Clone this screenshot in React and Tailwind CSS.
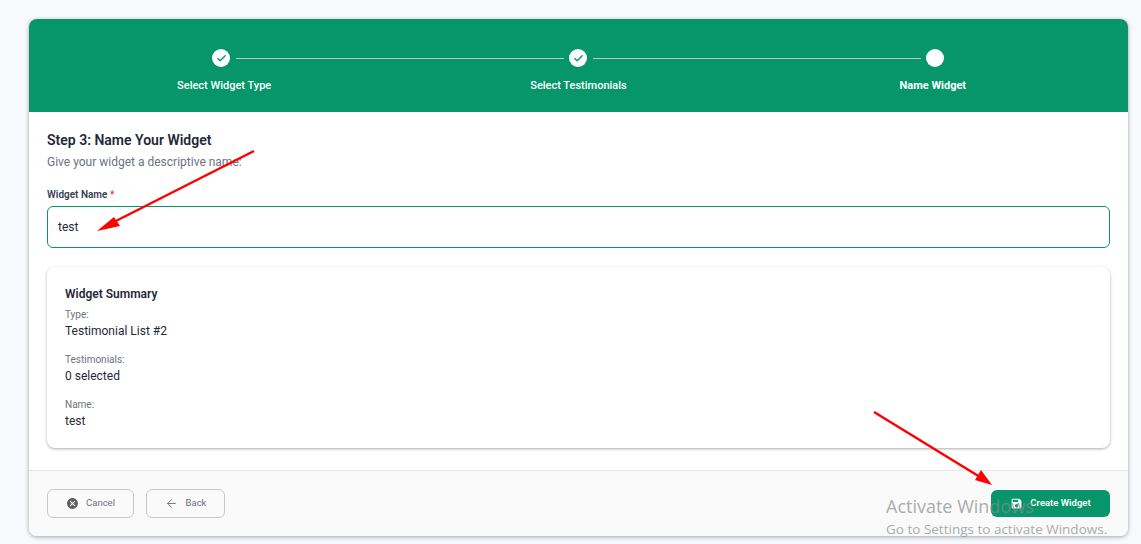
import { ArrowLeft, Check } from 'lucide-react';

const steps = [
  { label: 'Select Widget Type', done: true },
  { label: 'Select Testimonials', done: true },
  { label: 'Name Widget', done: false },
];

const summary = [
  { label: 'Type:', value: 'Testimonial List #2' },
  { label: 'Testimonials:', value: '0 selected' },
  { label: 'Name:', value: 'test' },
];

const Stepper = () => (
  <div className="flex h-[93px] rounded-t-lg bg-[#06966a] px-[18px] pt-[30px]">
    {steps.map((step, i) => (
      <div key={step.label} className="flex flex-1 flex-col items-stretch">
        <div className="flex h-[18px] items-center">
          <div className={`h-px flex-1 ${i === 0 ? '' : 'mr-[5px] bg-[#c9c4c4]'}`} />
          <div className="flex h-[18px] w-[18px] items-center justify-center rounded-full bg-white">
            {step.done && <Check className="h-[11px] w-[11px] text-[#06966a]" strokeWidth={3} />}
          </div>
          <div className={`h-px flex-1 ${i === 2 ? '' : 'ml-[6px] bg-[#c9c4c4]'}`} />
        </div>
        <div
          className={`mt-[11px] text-center text-[11px] leading-[16px] text-white ${
            step.done ? 'font-medium' : 'font-bold'
          }`}
        >
          {step.label}
        </div>
      </div>
    ))}
  </div>
);

const Arrows = () => (
  <svg className="pointer-events-none absolute left-0 top-0" width="1141" height="544">
    <line x1="254" y1="151" x2="108" y2="225" stroke="#fe0000" strokeWidth="2.5" />
    <polygon points="97,231 114,217 120,226" fill="#fe0000" />
    <line x1="874" y1="412" x2="980" y2="477" stroke="#fe0000" strokeWidth="2.5" />
    <polygon points="992,485 975,480 981,470" fill="#fe0000" />
  </svg>
);

export default function App() {
  return (
    <div
      className="relative h-[544px] w-[1141px] overflow-hidden bg-[#f8f9fc] pl-[29px] pt-[19px] text-[#1f2937]"
      style={{ fontFamily: 'Roboto, sans-serif' }}
    >
      <div className="flex h-[517px] w-[1099px] flex-col rounded-lg bg-white shadow-[0_1px_4px_rgba(0,0,0,0.35)]">
        <Stepper />

        {/* Form */}
        <div className="flex-1 px-[18px] pt-[18px]">
          <h2 className="text-[14px] font-semibold leading-[20px]">Step 3: Name Your Widget</h2>
          <p className="mt-[3px] text-[12px] leading-[18px] text-[#6b7280]">Give your widget a descriptive name:</p>

          <label className="mt-[16px] block text-[10px] font-semibold leading-[16px] text-[#374151]">
            Widget Name <span className="text-[#ef4444]">*</span>
          </label>
          <div className="mt-[3px] flex h-[42px] items-center rounded-md border border-[#06966a] px-[10px] text-[12px]">
            test
          </div>

          {/* Summary */}
          <div className="mt-[19px] h-[181px] rounded-lg bg-white px-[18px] pt-[18px] shadow-[0_1px_3px_rgba(0,0,0,0.32)]">
            <h3 className="text-[12px] font-semibold leading-[18px]">Widget Summary</h3>
            <div className="mt-[4px] flex flex-col gap-[12px]">
              {summary.map((row) => (
                <div key={row.label}>
                  <div className="text-[10px] leading-[15px] text-[#6b7280]">{row.label}</div>
                  <div className="text-[12px] leading-[18px]">{row.value}</div>
                </div>
              ))}
            </div>
          </div>
        </div>

        {/* Footer */}
        <div className="flex h-[66px] items-center justify-between rounded-b-lg border-t border-[#e5e7eb] bg-[#fafafa] px-[18px]">
          <div className="flex gap-3">
            <button className="flex h-[29px] w-[87px] items-center justify-center gap-[7px] rounded-md border border-[#c9c9c9] text-[9.5px] text-[#6b7280]">
              <svg width="13" height="13" viewBox="0 0 24 24" fill="#5f5f5f">
                <path d="M12 2C6.47 2 2 6.47 2 12s4.47 10 10 10 10-4.47 10-10S17.53 2 12 2zm5 13.59L15.59 17 12 13.41 8.41 17 7 15.59 10.59 12 7 8.41 8.41 7 12 10.59 15.59 7 17 8.41 13.41 12 17 15.59z" />
              </svg>
              Cancel
            </button>
            <button className="flex h-[29px] w-[79px] items-center justify-center gap-[8px] rounded-md border border-[#c9c9c9] text-[9.5px] text-[#6b7280]">
              <ArrowLeft className="h-[13px] w-[13px] text-[#5f5f5f]" strokeWidth={1.5} />
              Back
            </button>
          </div>
          <button className="flex h-[27px] w-[119px] items-center justify-center gap-[7px] rounded-md bg-[#06966a] text-[9.5px] font-semibold text-white">
            <svg width="13" height="13" viewBox="0 0 24 24" fill="#fff">
              <path d="M17 3H5a2 2 0 0 0-2 2v14a2 2 0 0 0 2 2h14a2 2 0 0 0 2-2V7l-4-4zm-5 16a3 3 0 1 1 0-6 3 3 0 0 1 0 6zm3-10H5V5h10v4z" />
            </svg>
            Create Widget
          </button>
        </div>
      </div>

      <Arrows />

      {/* Windows watermark */}
      <div
        className="absolute left-[886px] top-[494px] text-[#8a8a8a] opacity-70"
        style={{ fontFamily: '"Open Sans", sans-serif' }}
      >
        <div className="text-[18px] leading-[24px]">Activate Windows</div>
        <div className="mt-[1px] whitespace-nowrap text-[13.5px] leading-[20px]">Go to Settings to activate Windows.</div>
      </div>
    </div>
  );
}
